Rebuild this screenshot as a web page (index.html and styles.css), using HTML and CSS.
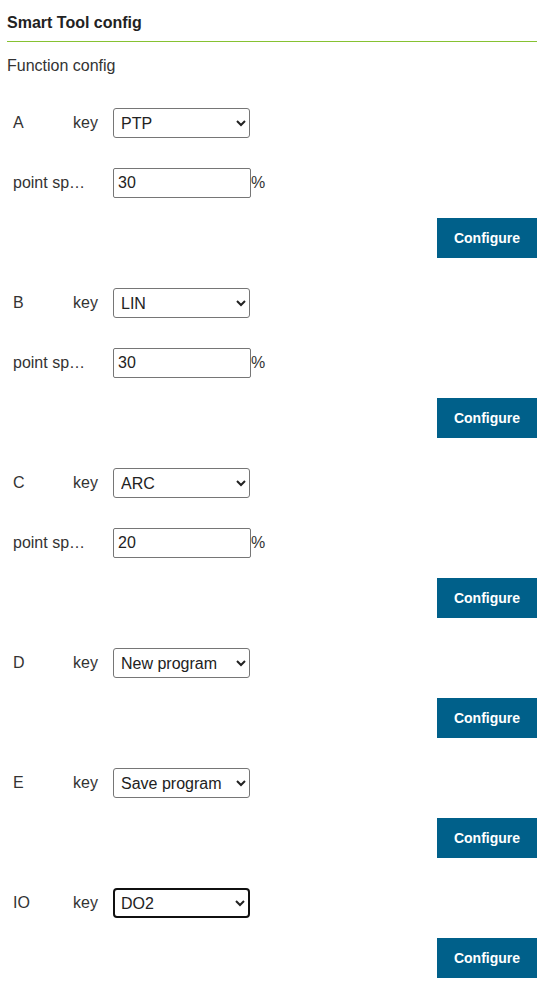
FILE: index.html
```html
<!DOCTYPE html>
<html>
<head>
<meta charset="utf-8">
<link rel="stylesheet" href="styles.css">
</head>
<body>
<div class="page">
  <h1 class="title">Smart Tool config</h1>
  <div class="subtitle">Function config</div>

  <div class="blocks">
    <div class="block">
      <div class="row"><span class="name">A</span><span class="key">key</span>
        <select class="sel"><option>PTP</option><option>LIN</option><option>ARC</option></select></div>
      <div class="row"><span class="plabel">point speed</span>
        <input class="num" type="text" value="30"><span class="unit">%</span></div>
      <div class="actions"><button class="btn">Configure</button></div>
    </div>

    <div class="block">
      <div class="row"><span class="name">B</span><span class="key">key</span>
        <select class="sel"><option>LIN</option><option>PTP</option><option>ARC</option></select></div>
      <div class="row"><span class="plabel">point speed</span>
        <input class="num" type="text" value="30"><span class="unit">%</span></div>
      <div class="actions"><button class="btn">Configure</button></div>
    </div>

    <div class="block">
      <div class="row"><span class="name">C</span><span class="key">key</span>
        <select class="sel"><option>ARC</option><option>PTP</option><option>LIN</option></select></div>
      <div class="row"><span class="plabel">point speed</span>
        <input class="num" type="text" value="20"><span class="unit">%</span></div>
      <div class="actions"><button class="btn">Configure</button></div>
    </div>

    <div class="block">
      <div class="row"><span class="name">D</span><span class="key">key</span>
        <select class="sel"><option>New program</option><option>Save program</option></select></div>
      <div class="actions"><button class="btn">Configure</button></div>
    </div>

    <div class="block">
      <div class="row"><span class="name">E</span><span class="key">key</span>
        <select class="sel"><option>Save program</option><option>New program</option></select></div>
      <div class="actions"><button class="btn">Configure</button></div>
    </div>

    <div class="block">
      <div class="row"><span class="name">IO</span><span class="key">key</span>
        <select class="sel focused"><option>DO2</option><option>DO1</option></select></div>
      <div class="actions"><button class="btn">Configure</button></div>
    </div>
  </div>
</div>
</body>
</html>
```

FILE: styles.css
```css
html, body {
  margin: 0;
  padding: 0;
  background: #ffffff;
}
body {
  font-family: "Liberation Sans", Arial, sans-serif;
  font-size: 16px;
  color: #333333;
}
.page {
  padding: 0 6px 0 7px;
}
.title {
  margin: 0;
  padding: 14px 0 9px;
  font-size: 16px;
  line-height: 18px;
  font-weight: bold;
  color: #222222;
  border-bottom: 1px solid #86c232;
}
.subtitle {
  margin-top: 15px;
  line-height: 18px;
}
.blocks {
  display: flex;
  flex-direction: column;
  gap: 30px;
  margin-top: 33px;
}
.block {
  display: flex;
  flex-direction: column;
  gap: 30px;
}
.row {
  display: flex;
  align-items: center;
  height: 30px;
  padding-left: 6px;
}
.actions {
  display: flex;
  justify-content: flex-end;
  margin-top: -10px;
}
.name {
  width: 60px;
}
.key {
  width: 40px;
}
.plabel {
  width: 80px;
  margin-right: 20px;
  white-space: nowrap;
  overflow: hidden;
  text-overflow: ellipsis;
}
.sel {
  box-sizing: border-box;
  width: 137px;
  height: 30px;
  font-family: "Liberation Sans", Arial, sans-serif;
  font-size: 16px;
  color: #222222;
  background-color: #ffffff;
  border: 1px solid #767676;
  border-radius: 3px;
  padding: 0 0 0 3px;
}
.sel.focused {
  border: 2px solid #101010;
  border-radius: 4px;
  padding-left: 2px;
}
.num {
  box-sizing: border-box;
  width: 138px;
  height: 30px;
  font-family: "Liberation Sans", Arial, sans-serif;
  font-size: 16px;
  color: #222222;
  border: 1px solid #767676;
  border-radius: 2px;
  padding: 0 4px;
  margin: 0;
}
.btn {
  width: 100px;
  height: 40px;
  border: none;
  background: #00608a;
  color: #ffffff;
  font-family: "Liberation Sans", Arial, sans-serif;
  font-size: 14px;
  font-weight: bold;
  padding: 0;
}
```
